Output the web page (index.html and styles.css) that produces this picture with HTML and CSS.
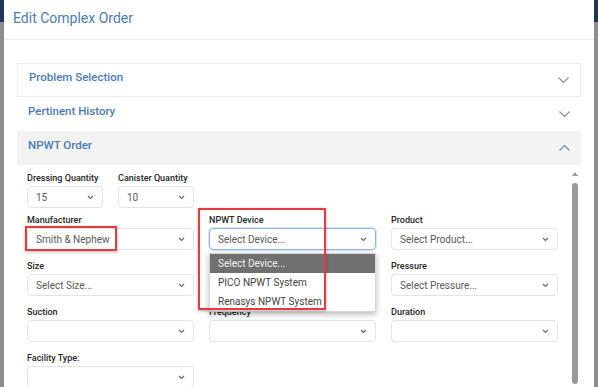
FILE: index.html
```html
<!DOCTYPE html>
<html lang="en">
<head>
  <meta charset="UTF-8">
  <title>Edit Complex Order</title>
  <link rel="stylesheet" href="styles.css">
</head>
<body>
  <div class="modal">
    <header class="modal-header">
      <h1>Edit Complex Order</h1>
    </header>

    <div class="modal-body">
      <div class="acc-item boxed">
        <span>Problem Selection</span>
        <svg width="11" height="6" viewBox="0 0 11 6"><path d="M0.5 0.5l5 5 5-5" fill="none" stroke="#8a8a8a" stroke-width="1.1"/></svg>
      </div>
      <div class="acc-item">
        <span>Pertinent History</span>
        <svg width="11" height="6" viewBox="0 0 11 6"><path d="M0.5 0.5l5 5 5-5" fill="none" stroke="#8a8a8a" stroke-width="1.1"/></svg>
      </div>
      <div class="acc-item open">
        <span>NPWT Order</span>
        <svg width="11" height="6" viewBox="0 0 11 6"><path d="M0.5 5.5l5-5 5 5" fill="none" stroke="#6b93c6" stroke-width="1.3"/></svg>
      </div>

      <div class="acc-body">
        <div class="form">
          <div class="qty-row">
            <div class="field">
              <label>Dressing Quantity</label>
              <div class="select"><span>15</span><svg width="7" height="5" viewBox="0 0 7 5"><path d="M1 1l2.5 2.5L6 1" fill="none" stroke="#666" stroke-width="1.1"/></svg></div>
            </div>
            <div class="field">
              <label>Canister Quantity</label>
              <div class="select"><span>10</span><svg width="7" height="5" viewBox="0 0 7 5"><path d="M1 1l2.5 2.5L6 1" fill="none" stroke="#666" stroke-width="1.1"/></svg></div>
            </div>
          </div>

          <div class="form-grid">
            <div class="field">
              <label>Manufacturer</label>
              <div class="select"><span>Smith &amp; Nephew</span><svg width="7" height="5" viewBox="0 0 7 5"><path d="M1 1l2.5 2.5L6 1" fill="none" stroke="#666" stroke-width="1.1"/></svg></div>
              <div class="mark mark-manufacturer"></div>
            </div>
            <div class="field">
              <label>NPWT Device</label>
              <div class="select focus"><span>Select Device...</span><svg width="7" height="5" viewBox="0 0 7 5"><path d="M1 1l2.5 2.5L6 1" fill="none" stroke="#666" stroke-width="1.1"/></svg></div>
              <ul class="dropdown">
                <li class="selected">Select Device...</li>
                <li>PICO NPWT System</li>
                <li>Renasys NPWT System</li>
              </ul>
              <div class="mark mark-device"></div>
            </div>
            <div class="field">
              <label>Product</label>
              <div class="select"><span>Select Product...</span><svg width="7" height="5" viewBox="0 0 7 5"><path d="M1 1l2.5 2.5L6 1" fill="none" stroke="#666" stroke-width="1.1"/></svg></div>
            </div>

            <div class="field">
              <label>Size</label>
              <div class="select"><span>Select Size...</span><svg width="7" height="5" viewBox="0 0 7 5"><path d="M1 1l2.5 2.5L6 1" fill="none" stroke="#666" stroke-width="1.1"/></svg></div>
            </div>
            <div class="field"></div>
            <div class="field">
              <label>Pressure</label>
              <div class="select"><span>Select Pressure...</span><svg width="7" height="5" viewBox="0 0 7 5"><path d="M1 1l2.5 2.5L6 1" fill="none" stroke="#666" stroke-width="1.1"/></svg></div>
            </div>

            <div class="field">
              <label>Suction</label>
              <div class="select"><span></span><svg width="7" height="5" viewBox="0 0 7 5"><path d="M1 1l2.5 2.5L6 1" fill="none" stroke="#666" stroke-width="1.1"/></svg></div>
            </div>
            <div class="field">
              <label>Frequency</label>
              <div class="select"><span></span><svg width="7" height="5" viewBox="0 0 7 5"><path d="M1 1l2.5 2.5L6 1" fill="none" stroke="#666" stroke-width="1.1"/></svg></div>
            </div>
            <div class="field">
              <label>Duration</label>
              <div class="select"><span></span><svg width="7" height="5" viewBox="0 0 7 5"><path d="M1 1l2.5 2.5L6 1" fill="none" stroke="#666" stroke-width="1.1"/></svg></div>
            </div>

            <div class="field">
              <label>Facility Type:</label>
              <div class="select"><span></span><svg width="7" height="5" viewBox="0 0 7 5"><path d="M1 1l2.5 2.5L6 1" fill="none" stroke="#666" stroke-width="1.1"/></svg></div>
            </div>
          </div>
        </div>

        <div class="scrollbar">
          <span class="scroll-up"></span>
          <span class="thumb"></span>
        </div>
      </div>
    </div>
  </div>
</body>
</html>
```

FILE: styles.css
```css
body {
  margin: 0;
  height: 387px;
  overflow: hidden;
  font-family: Roboto, 'Liberation Sans', sans-serif;
  background: linear-gradient(to bottom, #22365c 0, #22365c 22px, #8d8d8d 22px);
}

.modal {
  margin: 0 4px;
  height: 387px;
  background: #fff;
  overflow: hidden;
}

.modal-header {
  height: 40px;
  box-sizing: border-box;
  border-bottom: 1px solid #eeeeee;
  display: flex;
  align-items: center;
  padding: 0 9px 3px;
}

.modal-header h1 {
  margin: 0;
  font-size: 14px;
  font-weight: 400;
  color: #4c7bb5;
}

.modal-body {
  padding: 23px 13px 0;
}

.acc-item {
  height: 34px;
  box-sizing: border-box;
  display: flex;
  align-items: center;
  justify-content: space-between;
  padding: 0 11px;
  font-size: 11.5px;
  font-weight: 500;
  color: #4c7bb5;
}

.acc-item span {
  padding-bottom: 6px;
}

.acc-item.boxed {
  border: 1px solid #ececec;
}

.acc-item.open {
  background: #f3f3f3;
}

.acc-body {
  display: flex;
  padding: 7px 3px 0 10px;
}

.form {
  flex: 1;
}

.qty-row {
  display: flex;
  gap: 15px;
  margin-bottom: 6px;
}

.qty-row .field {
  width: 76px;
}

.form-grid {
  display: grid;
  grid-template-columns: repeat(3, 167px);
  column-gap: 15px;
  row-gap: 10px;
}

.field {
  position: relative;
}

.field label {
  display: block;
  height: 12px;
  line-height: 12px;
  margin-bottom: 2px;
  font-size: 9px;
  font-weight: 500;
  color: #262626;
}

.select {
  height: 22px;
  box-sizing: border-box;
  border: 1px solid #e4e4e4;
  border-radius: 4px;
  display: flex;
  align-items: center;
  justify-content: space-between;
  padding: 0 8px;
  font-size: 10px;
  color: #5a5a5a;
}

.select.focus {
  border-color: #8fb4e6;
  box-shadow: 0 0 0 1px rgba(143, 180, 230, 0.35);
}

.dropdown {
  position: absolute;
  top: 39px;
  left: 0;
  right: 0;
  margin: 0;
  padding: 0;
  list-style: none;
  background: #fff;
  border: 1px solid #d6d6d6;
  box-shadow: 0 2px 6px rgba(0, 0, 0, 0.3);
  font-size: 10px;
  color: #444;
  z-index: 2;
}

.dropdown li {
  height: 19px;
  line-height: 19px;
  padding-left: 8px;
}

.dropdown li.selected {
  background: #707070;
  color: #f2f2f2;
}

.mark {
  position: absolute;
  border: 2px solid #e8393c;
  box-shadow: 0 1px 3px rgba(0, 0, 0, 0.3);
  z-index: 3;
}

.mark-manufacturer {
  left: -2px;
  top: 12px;
  width: 88px;
  height: 21px;
}

.mark-device {
  left: -11px;
  top: -6px;
  width: 124px;
  height: 98px;
}

.scrollbar {
  width: 7px;
  display: flex;
  flex-direction: column;
  align-items: center;
}

.scroll-up {
  width: 0;
  height: 0;
  border-left: 3px solid transparent;
  border-right: 3px solid transparent;
  border-bottom: 4px solid #9a9a9a;
  margin-bottom: 7px;
}

.thumb {
  width: 6px;
  height: 201px;
  border-radius: 3px;
  background: #9a9a9a;
}
```
